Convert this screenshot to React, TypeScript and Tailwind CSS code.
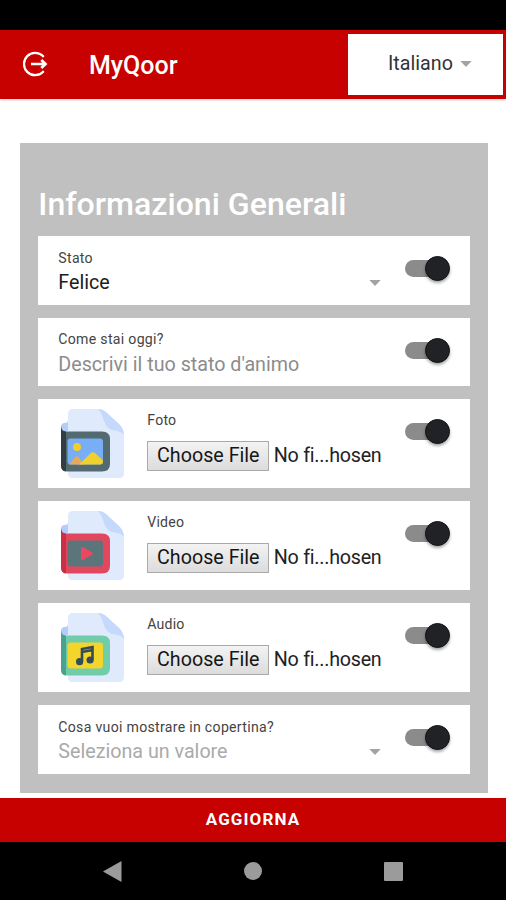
import type { ReactNode } from "react";

function Caret() {
  return (
    <svg width="12" height="6" viewBox="0 0 12 6" className="block shrink-0">
      <path d="M0.3 0H11.7L6 6Z" fill="#a3a3a3" />
    </svg>
  );
}

function Toggle() {
  return (
    <div className="flex h-[26px] w-[45px] shrink-0 items-center justify-end rounded-full">
      <div className="h-[17px] w-[32px] shrink-0 rounded-full bg-[#8b8b8b]" />
      <div className="-ml-[12px] size-[25px] shrink-0 rounded-full border border-[#111214] bg-[#212226] shadow-[0_2px_3px_rgba(0,0,0,0.35)]" />
    </div>
  );
}

function FileIcon({ edge, frame, screen, children }: { edge: string; frame: string; screen: string; children: ReactNode }) {
  return (
    <svg width="65" height="70" viewBox="0 0 65 70" className="mt-[9.5px] block shrink-0">
      <path d="M13 0H38Q43 0 47 4L59 15Q64 20 64 26V64Q64 69 59 69H12Q8 69 8 64V5Q8 0 13 0Z" fill="#dfeafd" />
      <path d="M38 0Q43 0 47 4L59 15Q64 20 64 26Q61 22 55 21.5Q47 21 44 12Q42 4 38 0Z" fill="#c4d9fb" />
      <path d="M1 21V18Q1 14 5 14Q8 14 8 11V22H1Z" fill="#b2cdf9" />
      <path d="M1 17Q1 22.5 7 22.5H42Q50 22.5 50 30V55Q50 62.5 42 62.5H7Q1 62.5 1 56Z" fill={frame} />
      <path d="M1 17Q1 22.5 6 22.5V62.5Q1 62 1 56Z" fill={edge} />
      <rect x="7.5" y="29.5" width="35.5" height="26" rx="3" fill={screen} />
      {children}
    </svg>
  );
}

function PhotoIcon() {
  return (
    <FileIcon edge="#303e43" frame="#536a70" screen="#78aef6">
      <circle cx="17" cy="38" r="4" fill="#f4cd2c" />
      <path d="M9 55.5L15.5 48Q17 46.5 18.5 48L24 55.5Z" fill="#e8aa58" />
      <path d="M19 55.5L31 44Q33 42.5 35 44L43 51.5V52.5Q43 55.5 40 55.5Z" fill="#efd02c" />
    </FileIcon>
  );
}

function VideoIcon() {
  return (
    <FileIcon edge="#c92f47" frame="#e2485d" screen="#5b757b">
      <path d="M21 37.5Q21 35 23.5 36.2L32 41.2Q34 42.5 32 43.8L23.5 48.8Q21 50 21 47.5Z" fill="#e9485e" />
    </FileIcon>
  );
}

function AudioIcon() {
  return (
    <FileIcon edge="#49a28e" frame="#70cca9" screen="#f4d52b">
      <path d="M22 48.5V36L32.5 34V46.5M22 39L32.5 37" fill="none" stroke="#354c52" strokeWidth="2.6" />
      <circle cx="19.6" cy="48.7" r="3.6" fill="#354c52" />
      <circle cx="30.1" cy="47" r="3.6" fill="#354c52" />
    </FileIcon>
  );
}

function FieldCard({ label, value, tone, select = false }: { label: string; value: string; tone: string; select?: boolean }) {
  return (
    <section className="flex h-[68.6px] justify-between bg-white pr-5 pl-5">
      <div className="w-[322.5px] pt-[13.7px]">
        <div className="h-[17px] text-[14.1px] leading-[17px] tracking-[0.3px] whitespace-nowrap text-[#444]">{label}</div>
        <div className="mt-[4.3px] flex h-6 items-center justify-between">
          <span className={`text-[19.7px] leading-6 whitespace-nowrap ${tone}`}>{value}</span>
          {select && <Caret />}
        </div>
      </div>
      <div className="pt-[19.5px]"><Toggle /></div>
    </section>
  );
}

function FileCard({ label, icon }: { label: string; icon: ReactNode }) {
  return (
    <section className="flex h-[89.1px] bg-white pr-5 pl-[22px]">
      {icon}
      <div className="ml-[22px] grow pt-[12.7px]">
        <div className="text-[14.1px] leading-[17px] tracking-[0.2px] text-[#444]">{label}</div>
        <div className="mt-[12px] flex items-center">
          <button className="h-[30px] w-[122px] border border-[#aaa] bg-linear-to-b from-[#f3f3f3] to-[#dcdcdc] text-[19.7px] leading-7 whitespace-nowrap text-[#161616]">Choose File</button>
          <span className="ml-[4.5px] text-[19.7px] tracking-[-0.25px] whitespace-nowrap text-[#222]">No fi...hosen</span>
        </div>
      </div>
      <div className="pt-[19.5px]"><Toggle /></div>
    </section>
  );
}

export default function App() {
  return (
    <main className="flex h-[900px] w-[506px] flex-col overflow-hidden bg-white font-[Roboto,sans-serif]">
      <div className="h-[29.5px] shrink-0 bg-black" />
      <header className="flex h-[69px] shrink-0 items-center bg-[#c70000] shadow-[0_1px_3px_rgba(0,0,0,0.2)]">
        <svg width="25" height="26" viewBox="0 0 25 26" className="ml-[22.5px] block" fill="none" stroke="white" strokeWidth="2.3">
          <path d="M20 6.2V5A11.2 11.2 0 1 0 20 21V19.8" />
          <path d="M8 13H23M18.3 9L22.5 13L18.3 17" strokeWidth="2.7" />
        </svg>
        <h1 className="ml-[41.5px] pt-[3px] text-[25px] leading-8 font-medium text-white">MyQoor</h1>
        <div className="mr-[3px] ml-auto flex h-[61px] w-[155px] items-center bg-white pl-[40px]">
          <span className="w-[72px] text-[19.7px] text-[#333]">Italiano</span>
          <Caret />
        </div>
      </header>
      <div className="ml-[20px] mt-[44.5px] h-[650px] w-[467.5px] shrink-0 bg-[#c0c0c0] pl-[18.3px]">
        <h2 className="h-[93.3px] pt-[42px] text-[32.1px] leading-[38px] font-medium whitespace-nowrap text-white">Informazioni Generali</h2>
        <div className="flex w-[431.4px] flex-col gap-[12.9px]">
          <FieldCard label="Stato" value="Felice" tone="text-[#202020]" select />
          <FieldCard label="Come stai oggi?" value="Descrivi il tuo stato d'animo" tone="text-[#8c8c8c]" />
          <FileCard label="Foto" icon={<PhotoIcon />} />
          <FileCard label="Video" icon={<VideoIcon />} />
          <FileCard label="Audio" icon={<AudioIcon />} />
          <FieldCard label="Cosa vuoi mostrare in copertina?" value="Seleziona un valore" tone="text-[#aaa]" select />
        </div>
      </div>
      <button className="mt-auto h-[44px] shrink-0 bg-[#c70000] pb-[2px] text-[17px] leading-none font-bold tracking-[1.1px] text-white">AGGIORNA</button>
      <nav className="flex h-[58px] shrink-0 justify-between bg-black px-[103px] pt-[18.5px]">
        <svg width="19" height="21" viewBox="0 0 19 21"><path d="M0 10.5L18.5 0V21Z" fill="#9b9b9b" /></svg>
        <div className="mt-[1px] size-[18px] rounded-full bg-[#9b9b9b]" />
        <div className="mt-[1px] size-[19px] rounded-[1px] bg-[#9b9b9b]" />
      </nav>
    </main>
  );
}
